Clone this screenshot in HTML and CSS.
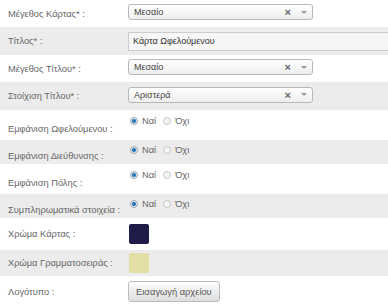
FILE: index.html
```html
<!DOCTYPE html>
<html lang="el">
<head>
    <meta charset="UTF-8">
    <title>Κάρτα</title>
    <link rel="stylesheet" href="styles.css">
</head>
<body>
    <div class="form">
        <div class="row row-sel">
            <div class="label">Μέγεθος Κάρτας* :</div>
            <div class="field">
                <div class="select">
                    <span class="select-text">Μεσαίο</span>
                    <span class="select-clear">&#215;</span>
                    <span class="select-arrow"></span>
                </div>
            </div>
        </div>
        <div class="row row-sel alt">
            <div class="label">Τίτλος* :</div>
            <div class="field">
                <input class="text-input" type="text" value="Κάρτα Ωφελούμενου">
            </div>
        </div>
        <div class="row row-sel">
            <div class="label">Μέγεθος Τίτλου* :</div>
            <div class="field">
                <div class="select">
                    <span class="select-text">Μεσαίο</span>
                    <span class="select-clear">&#215;</span>
                    <span class="select-arrow"></span>
                </div>
            </div>
        </div>
        <div class="row row-sel alt">
            <div class="label">Στοίχιση Τίτλου* :</div>
            <div class="field">
                <div class="select">
                    <span class="select-text">Αριστερά</span>
                    <span class="select-clear">&#215;</span>
                    <span class="select-arrow"></span>
                </div>
            </div>
        </div>
        <div class="row row-radio r1">
            <div class="label">Εμφάνιση Ωφελούμενου :</div>
            <div class="field radios">
                <span class="radio on"></span><span class="radio-text">Ναί</span>
                <span class="radio"></span><span class="radio-text">Όχι</span>
            </div>
        </div>
        <div class="row row-radio r2 alt">
            <div class="label">Εμφάνιση Διεύθυνσης :</div>
            <div class="field radios">
                <span class="radio on"></span><span class="radio-text">Ναί</span>
                <span class="radio"></span><span class="radio-text">Όχι</span>
            </div>
        </div>
        <div class="row row-radio r1">
            <div class="label">Εμφάνιση Πόλης :</div>
            <div class="field radios">
                <span class="radio on"></span><span class="radio-text">Ναί</span>
                <span class="radio"></span><span class="radio-text">Όχι</span>
            </div>
        </div>
        <div class="row row-radio r2 alt">
            <div class="label">Συμπληρωματικά στοιχεία :</div>
            <div class="field radios">
                <span class="radio on"></span><span class="radio-text">Ναί</span>
                <span class="radio"></span><span class="radio-text">Όχι</span>
            </div>
        </div>
        <div class="row row-color">
            <div class="label">Χρώμα Κάρτας :</div>
            <div class="field">
                <span class="swatch card-color"></span>
            </div>
        </div>
        <div class="row row-color2 alt">
            <div class="label">Χρώμα Γραμματοσειράς :</div>
            <div class="field">
                <span class="swatch font-color"></span>
            </div>
        </div>
        <div class="row row-file">
            <div class="label">Λογότυπο :</div>
            <div class="field">
                <button class="file-button">Εισαγωγή αρχείου</button>
            </div>
        </div>
    </div>
</body>
</html>
```

FILE: styles.css
```css
* {
    margin: 0;
    padding: 0;
    box-sizing: border-box;
}

body {
    background: #fff;
    font-family: 'Liberation Sans', Arial, sans-serif;
    font-size: 9.3px;
    color: #666;
    width: 388px;
    height: 308px;
    overflow: hidden;
}

.row {
    display: flex;
    align-items: center;
}

.row.alt {
    background: #ececec;
}

.row-sel {
    height: 27px;
}

.row-sel.alt {
    height: 28px;
}

.row-radio.r1 {
    height: 30px;
}

.row-radio.r2 {
    height: 24px;
}

.row-color {
    height: 32px;
}

.row-color2 {
    height: 26px;
}

.row-file {
    height: 31px;
}

.label {
    width: 128px;
    padding-left: 8px;
    white-space: nowrap;
}

.field {
    flex: 1;
    display: flex;
    align-items: center;
}

.select {
    width: 185px;
    height: 16px;
    border: 1px solid #b8b8b8;
    border-radius: 3px;
    background: linear-gradient(#fff, #eee);
    display: flex;
    align-items: center;
    padding-left: 5px;
    font-size: 9px;
    color: #444;
    margin-bottom: 3px;
}

.select-text {
    flex: 1;
}

.select-clear {
    color: #666;
    font-size: 11px;
    font-weight: bold;
    margin-right: 10px;
}

.select-arrow {
    width: 0;
    height: 0;
    border-left: 3px solid transparent;
    border-right: 3px solid transparent;
    border-top: 3px solid #999;
    margin-right: 5px;
}

.text-input {
    width: 100%;
    height: 19px;
    border: 1px solid #ccc;
    border-right: none;
    background: #f6f6f6;
    font-family: 'Liberation Sans', Arial, sans-serif;
    font-size: 9px;
    color: #333;
    padding-left: 4px;
    outline: none;
}

.radios {
    align-self: flex-start;
    padding-top: 6px;
}

.row-radio.r2 .radios {
    padding-top: 5px;
}

.row-radio .label {
    padding-top: 8px;
}

.radio {
    width: 8px;
    height: 8px;
    border-radius: 50%;
    border: 1px solid #c8c8c8;
    background: #f4f4f4;
    margin-left: 2px;
    margin-right: 4px;
}

.radio.on {
    border-color: #9aa8b4;
    background: radial-gradient(circle, #1d6fb8 0, #2f7fc0 1.6px, #e4e8ec 2.4px);
}

.radio-text {
    font-size: 9.3px;
    color: #666;
    margin-right: 5px;
}

.swatch {
    width: 20px;
    height: 20px;
    border-radius: 2px;
    margin-left: 1px;
}

.card-color {
    background: #1f1d47;
}

.font-color {
    background: #e2dea6;
}

.file-button {
    height: 21px;
    padding: 0 7px;
    border: 1px solid #bbb;
    border-radius: 3px;
    background: linear-gradient(#fdfdfd, #dedede);
    font-family: 'Liberation Sans', Arial, sans-serif;
    font-size: 9.3px;
    color: #555;
}
```
